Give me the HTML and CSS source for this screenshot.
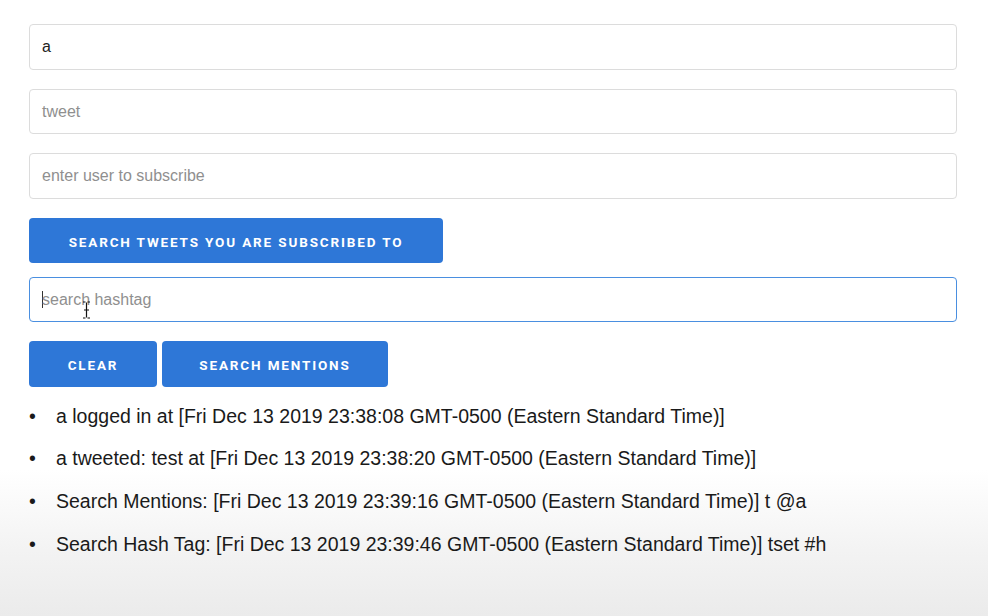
FILE: index.html
```html
<!DOCTYPE html>
<html>
<head>
<meta charset="utf-8">
<link rel="stylesheet" href="styles.css">
</head>
<body>
<div class="page">
  <div class="field"><span class="value">a</span></div>
  <div class="field gap19"><span class="ph">tweet</span></div>
  <div class="field gap19"><span class="ph">enter user to subscribe</span></div>
  <div class="row gap19"><button class="btn wide">Search tweets you are subscribed to</button></div>
  <div class="field focus gap13"><span class="caret"></span><span class="ph">search hashtag</span>
    <svg class="ibeam" width="9" height="18" viewBox="0 0 9 18"><path d="M1 1h2.5M5.5 1H8M4.5 1.5v15M1 17h2.5M5.5 17H8M2 9h5" stroke="#111" stroke-width="1.2" fill="none"/></svg>
  </div>
  <div class="row gap19">
    <button class="btn clear">Clear</button>
    <button class="btn mentions">Search mentions</button>
  </div>
  <ul class="log">
    <li>a logged in at [Fri Dec 13 2019 23:38:08 GMT-0500 (Eastern Standard Time)]</li>
    <li>a tweeted: test at [Fri Dec 13 2019 23:38:20 GMT-0500 (Eastern Standard Time)]</li>
    <li>Search Mentions: [Fri Dec 13 2019 23:39:16 GMT-0500 (Eastern Standard Time)] t @a</li>
    <li>Search Hash Tag: [Fri Dec 13 2019 23:39:46 GMT-0500 (Eastern Standard Time)] tset #h</li>
  </ul>
</div>
</body>
</html>
```
FILE: styles.css
```css
html, body {
  margin: 0;
  height: 100%;
}
body {
  background: linear-gradient(to bottom, #ffffff 0px, #ffffff 470px, #f3f3f3 550px, #ebebeb 616px);
  font-family: "Liberation Sans", Arial, sans-serif;
  color: #222;
}
.page {
  padding: 24px 0 0 29px;
  width: 928px;
  display: flex;
  flex-direction: column;
}
.field {
  position: relative;
  box-sizing: border-box;
  height: 45.5px;
  border: 1px solid #dcdcdc;
  border-radius: 4px;
  background: #fff;
  display: flex;
  align-items: center;
  padding-left: 12px;
  padding-top: 1px;
  font-size: 16px;
}
.field.focus {
  border-color: #4a8fe0;
}
.gap19 { margin-top: 19px; }
.gap13 { margin-top: 13.5px; }
.value { color: #222; }
.ph { color: #8f8f8f; }
.caret {
  display: inline-block;
  width: 1px;
  height: 17px;
  background: #333;
  margin-right: -1px;
}
.ibeam {
  position: absolute;
  left: 52px;
  top: 23px;
}
.row {
  display: flex;
  gap: 5px;
}
.btn {
  box-sizing: border-box;
  height: 45.5px;
  border: none;
  border-radius: 4px;
  background: #2e77d7;
  color: #fff;
  font-family: Roboto, "Liberation Sans", sans-serif;
  font-weight: 700;
  font-size: 13.5px;
  letter-spacing: 1.85px;
  text-transform: uppercase;
  padding: 3px 0 0 0;
}
.btn.wide { width: 414px; }
.btn.clear { width: 128px; }
.btn.mentions { width: 226px; }
.log {
  list-style: none;
  margin: 19px 0 0 0;
  padding-left: 0;
  font-size: 19.5px;
  line-height: 21px;
  color: #1a1a1a;
}
.log li {
  display: flex;
  margin-bottom: 21.7px;
}
.log li::before {
  content: "•";
  width: 27px;
  flex: none;
}
```
